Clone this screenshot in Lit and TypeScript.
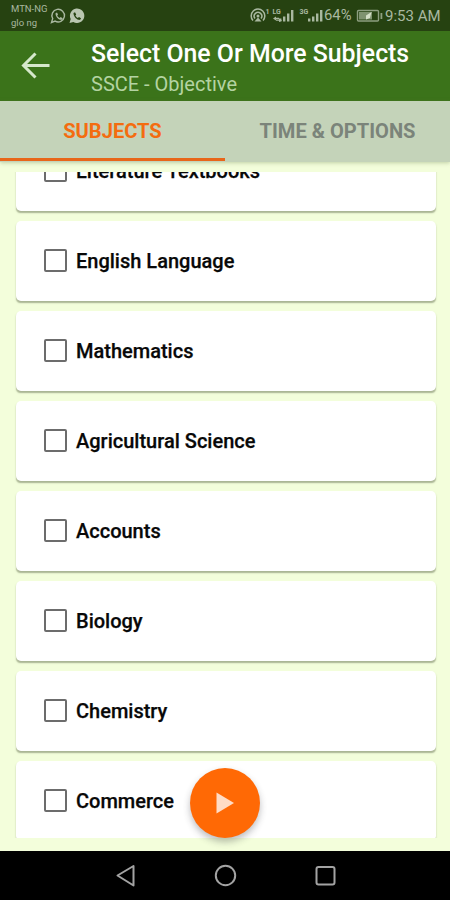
import { LitElement, html, css, svg } from "lit";
import { customElement } from "lit/decorators.js";

const SUBJECTS = [
  "Literature Textbooks",
  "English Language",
  "Mathematics",
  "Agricultural Science",
  "Accounts",
  "Biology",
  "Chemistry",
  "Commerce",
];

const bars = (x: number) => svg`
  <rect x=${x} y="18.5" width="2.4" height="3" />
  <rect x=${x + 4} y="16.5" width="2.4" height="5" />
  <rect x=${x + 8} y="13.5" width="2.4" height="8" />
  <rect x=${x + 12} y="10" width="2.4" height="11.5" />`;

@customElement("status-bar")
class StatusBar extends LitElement {
  static styles = css`
    :host { display: flex; height: 31px; background: #264211; color: #a9b8a0; align-items: flex-start; box-sizing: border-box; }
    .carriers { width: 38px; margin: 2px 0 0 11px; font-size: 9.5px; line-height: 13.5px; white-space: nowrap; }
    .left { width: 36px; height: 31px; }
    .signals { width: 76px; height: 31px; margin-left: auto; }
    .pct { font-size: 14.8px; line-height: 31px; width: 31px; }
    .battery { width: 30px; height: 31px; }
    .time { font-size: 15px; line-height: 32px; width: 65px; white-space: nowrap; }
    .tiny { font: 700 7px Roboto, sans-serif; }
  `;
  render() {
    return html`
      <div class="carriers"><div>MTN-NG</div><div>glo ng</div></div>
      <svg class="left" viewBox="49 0 36 31">
        <path d="M51.5 22.5l1.2-3.8a6.3 6.3 0 1 1 2.4 2.4z" fill="none" stroke="#a9b8a0" stroke-width="1.4" />
        <path d="M55.5 13.2l1.5-.7 1 2-.8 1.2c.6 1.1 1.3 1.8 2.4 2.3l1.1-1 2 1.2c-.3 1.5-1.2 1.9-2.4 1.6-2.5-.7-4.8-3.5-4.8-6.6z" fill="#a9b8a0" />
        <path d="M69.500 23l1.200-4a7.200 7.200 0 1 1 2.700 2.900z" fill="#b9c6b0" />
        <path d="M73.500 13l1.500-.8 1.200 2.200-.8 1.200c.6 1.100 1.300 1.800 2.400 2.300l1.200-1 2 1.400c-.3 1.400-1.300 1.800-2.500 1.500-2.600-.8-5-3.600-5-6.800z" fill="#264211" />
      </svg>
      <svg class="signals" viewBox="248 0 76 31" fill="#a9b8a0">
        <g fill="none" stroke="#a9b8a0" stroke-width="1.5">
          <path d="M253 20.500a6.800 6.800 0 1 1 10 0" />
          <path d="M255 18.500a3.800 3.800 0 1 1 6 0" />
        </g>
        <circle cx="258" cy="16" r="1.500" />
        <path d="M254.500 21.500l3.500-4 3.500 4z" />
        <text class="tiny" x="265.500" y="14">1</text>
        <text class="tiny" x="272.500" y="13.500">LG</text>
        <path d="M273 18.500l3-2v1.300h3v1.400h-3v1.300zM282 20.500l-3-2v1.300h-3v1h3v1.300z" />
        ${bars(279)}
        <text class="tiny" x="299.500" y="14">3G</text>
        ${bars(308)}
      </svg>
      <div class="pct">64%</div>
      <svg class="battery" viewBox="354 0 30 31">
        <rect x="356.500" y="10.500" width="21" height="10.500" rx="1" fill="none" stroke="#8d9f80" stroke-width="1.400" />
        <rect x="358" y="12" width="13" height="7.500" fill="#7f9370" />
        <rect x="379.500" y="13" width="1.800" height="6" fill="#8d9f80" />
        <path d="M370.500 12l-5.500 3.500v4l4-1.500z" fill="#d5e0c8" />
      </svg>
      <div class="time">9:53 AM</div>
    `;
  }
}

@customElement("subject-card")
class SubjectCard extends LitElement {
  static properties = { name: { type: String } };
  declare name: string;
  static styles = css`
    :host { display: flex; align-items: center; height: 80px; flex: none; background: #fff; border-radius: 5px; box-shadow: 0 2px 1.500px -0.500px rgba(110, 120, 90, 0.550); box-sizing: border-box; padding-left: 28px; }
    .box { width: 23px; height: 23px; box-sizing: border-box; border: 2px solid #6c6c6c; border-radius: 2px; margin: -2px 9px 0 0; }
    .label { font-size: 20px; font-weight: 500; color: #080808; line-height: 26px; white-space: nowrap; -webkit-text-stroke: 0.25px #080808; }
  `;
  render() {
    return html`<div class="box"></div><div class="label">${this.name}</div>`;
  }
}

@customElement("app-root")
class AppRoot extends LitElement {
  static styles = css`
    :host { display: flex; flex-direction: column; position: relative; width: 450px; height: 900px; overflow: hidden; background: #f3fedb; font-family: Roboto, sans-serif; }
    .bar { height: 70px; background: #3b731a; display: flex; flex: none; }
    .back { width: 91px; height: 70px; flex: none; }
    .title { margin-top: 9px; font-size: 24.85px; line-height: 28px; font-weight: 500; color: #fff; white-space: nowrap; }
    .sub { font-size: 20px; line-height: 24px; margin-top: 4px; color: #b4d3a2; white-space: nowrap; }
    .tabs { height: 61px; display: flex; flex: none; background: #c4d3b9; box-shadow: 0 1px 4px rgba(100, 120, 70, 0.350); z-index: 1; }
    .tab { flex: 1; box-sizing: border-box; text-align: center; font-size: 20.1px; line-height: 60px; font-weight: 700; color: #7b847a; height: 60px; }
    .tab.active { color: #f46c10; border-bottom: 3px solid #e8661a; }
    .list { margin-top: 10px; height: 666px; flex: none; overflow: hidden; padding: 0 14px 0 16px; display: flex; flex-direction: column; gap: 10px; }
    .first { margin-top: -41px; }
    .nav { margin-top: auto; height: 49px; background: #000; flex: none; display: flex; }
    .nav svg { width: 450px; height: 49px; }
    .fab { position: absolute; left: 190px; top: 768px; width: 70px; height: 70px; border-radius: 50%; background: #ff6905; box-shadow: 0 4px 7px rgba(40, 40, 50, 0.300); z-index: 2; }
    .fab svg { display: block; width: 70px; height: 70px; }
  `;
  render() {
    return html`
      <status-bar></status-bar>
      <header class="bar">
        <svg class="back" viewBox="0 31 91 70" fill="none" stroke="#d5e8cb" stroke-width="3">
          <path d="M49.500 65.500H23.500M35.500 53.500l-12 12 12 12" />
        </svg>
        <div>
          <div class="title">Select One Or More Subjects</div>
          <div class="sub">SSCE - Objective</div>
        </div>
      </header>
      <nav class="tabs">
        <div class="tab active">SUBJECTS</div>
        <div class="tab">TIME &amp; OPTIONS</div>
      </nav>
      <main class="list">
        ${SUBJECTS.map((s, i) => html`<subject-card class=${i === 0 ? "first" : ""} .name=${s}></subject-card>`)}
      </main>
      <div class="fab">
        <svg viewBox="0 0 70 70"><path d="M26.500 24.500v21L44 35z" fill="#ffdcc6" /></svg>
      </div>
      <footer class="nav">
        <svg viewBox="0 851 450 49" fill="none" stroke="#a3a3a3" stroke-width="2">
          <path d="M133.500 866v19.500L117.500 875.500z" stroke-linejoin="round" />
          <circle cx="225.500" cy="875.500" r="9.700" />
          <rect x="316.500" y="867" width="18" height="17.500" rx="2" />
        </svg>
      </footer>
    `;
  }
}
